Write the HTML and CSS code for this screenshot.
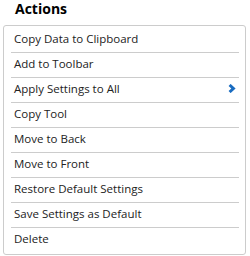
FILE: index.html
```html
<!DOCTYPE html>
<html lang="en">
<head>
    <meta charset="UTF-8">
    <title>Actions</title>
    <link rel="stylesheet" href="styles.css">
</head>
<body>
    <h1 class="title">Actions</h1>

    <!-- Action menu -->
    <ul class="menu">
        <li class="menu-item">Copy Data to Clipboard</li>
        <li class="menu-item">Add to Toolbar</li>
        <li class="menu-item">
            Apply Settings to All
            <svg class="chevron" width="8" height="9" viewBox="0 0 8 9">
                <polyline points="1.6,1 5.4,4.5 1.6,8" fill="none" stroke="#1a6cc0" stroke-width="3"/>
            </svg>
        </li>
        <li class="menu-item">Copy Tool</li>
        <li class="menu-item">Move to Back</li>
        <li class="menu-item">Move to Front</li>
        <li class="menu-item">Restore Default Settings</li>
        <li class="menu-item">Save Settings as Default</li>
        <li class="menu-item">Delete</li>
    </ul>
</body>
</html>
```

FILE: styles.css
```css
body {
    margin: 0;
    font-family: "Open Sans", Arial, sans-serif;
    background: #fff;
    color: #222;
}

.title {
    margin: 1px 0 8px 15px;
    font-size: 14px;
    line-height: 16px;
    font-weight: bold;
    color: #000;
}

.menu {
    list-style: none;
    margin: 0 0 0 3px;
    padding: 2px 6px 2px 7px;
    box-sizing: border-box;
    width: 243px;
    border: 1px solid #ccc;
    border-radius: 3px;
}

.menu-item {
    display: flex;
    align-items: center;
    justify-content: space-between;
    height: 25px;
    padding: 0 3px 3px 3px;
    box-sizing: border-box;
    font-size: 11.5px;
    line-height: 21px;
    border-bottom: 1px solid #ccc;
}

.menu-item:last-child {
    border-bottom: none;
    height: 24px;
}
```
